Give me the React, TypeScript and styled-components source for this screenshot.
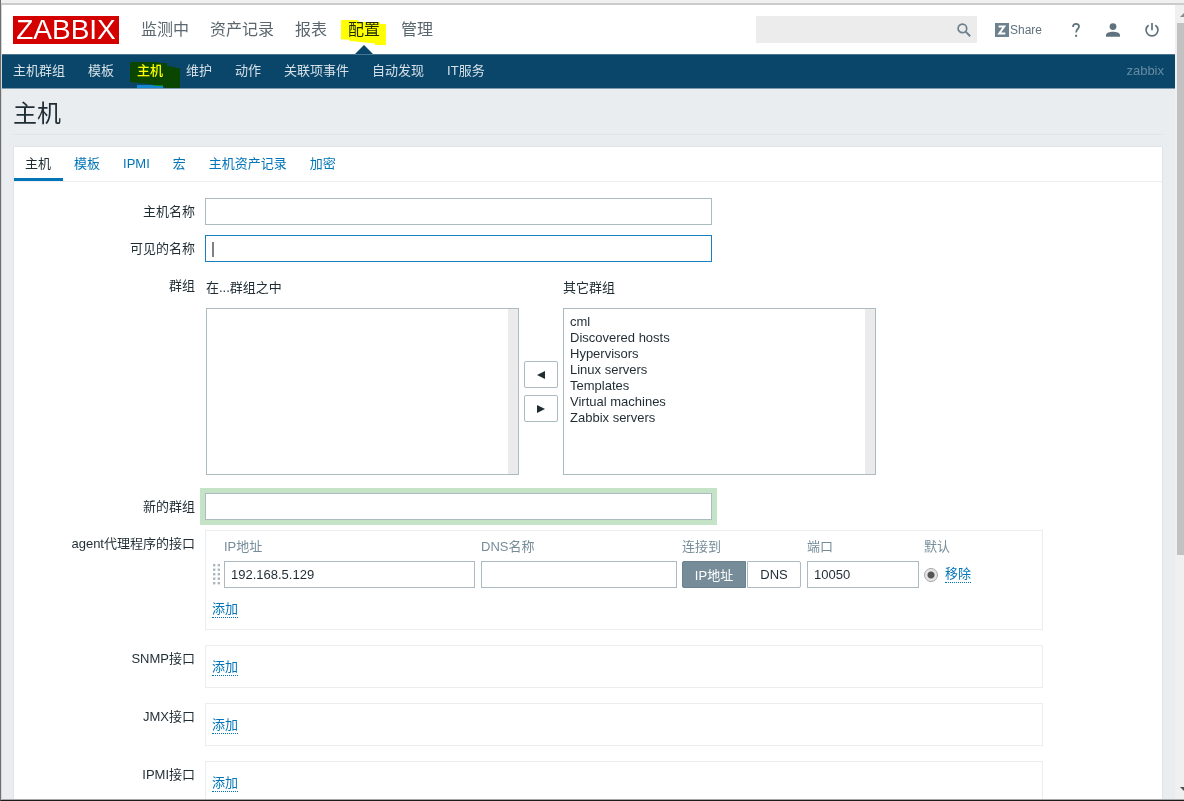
import React from "react";
import styled, { createGlobalStyle, css } from "styled-components";

const GlobalStyle = createGlobalStyle`
  * { box-sizing: border-box; }
  body { margin: 0; overflow: hidden; }
  body, button, input, select {
    font-family: "Liberation Sans", "Noto Sans CJK SC", sans-serif;
    font-size: 13px;
    color: #1f2c33;
  }
`;

const Window = styled.div`
  height: 100vh;
  display: flex;
  flex-direction: column;
  border-left: 1px solid #6e6e6e;
  border-bottom: 1px solid #1c1c1c;
`;
const WindowEdge = styled.div`
  flex: none;
  height: 5px;
  background: #f0f0f0;
  border-bottom: 2px solid #cbcbcb;
`;
const Viewport = styled.div`
  flex: 1;
  min-height: 0;
  display: flex;
  border-left: 1px solid #d5d8da;
  border-bottom: 1px solid #a8a8a8;
`;
const Page = styled.div`
  flex: 1;
  min-width: 0;
  overflow: hidden;
  background: #e9edf0;
`;

const ScrollTrack = styled.div`
  flex: none;
  width: 9px;
  display: flex;
  flex-direction: column;
  padding-left: 2px;
  background: #f0f0f0;
`;
const ScrollArrow = styled.svg`
  flex: none;
  width: 7px;
  height: 18px;
`;
const ScrollThumb = styled.div`
  flex: 0 0 67%;
  background: #c1c1c1;
`;
const ScrollSpace = styled.div`
  flex: 1;
`;

const Header = styled.header`
  height: 49px;
  display: flex;
  align-items: center;
  padding: 0 16px 0 11px;
  background: #fff;
`;
const Logo = styled.a`
  width: 106px;
  height: 28px;
  background: #d40000;
  color: #fff;
  font-size: 28px;
  line-height: 28px;
  text-align: center;
  text-decoration: none;
`;
const TopMenu = styled.nav`
  display: flex;
  align-self: stretch;
  gap: 21px;
  margin-left: 22px;
`;
const TopLink = styled.a<{ $active?: boolean }>`
  position: relative;
  font-size: 16px;
  line-height: 49px;
  color: ${(p) => (p.$active ? "#1f2c33" : "#5a676e")};
  text-decoration: none;
  ${(p) =>
    p.$active &&
    css`
      &::after {
        content: "";
        position: absolute;
        left: 7px;
        bottom: 0;
        border: 9px solid transparent;
        border-top: 0;
        border-bottom-color: #0a466a;
      }
    `}
`;
const Marker = styled.svg`
  position: absolute;
  mix-blend-mode: multiply;
  pointer-events: none;
  fill: #ffff00;
`;
const TopMarker = styled(Marker)`
  left: -7px;
  top: 15px;
  width: 45px;
  height: 25px;
`;
const SubMarker = styled(Marker)`
  left: -7px;
  top: 7px;
  width: 50px;
  height: 26px;
`;

const Tools = styled.div`
  display: flex;
  align-items: center;
  margin-left: auto;
  color: #6c818d;
`;
const Search = styled.form`
  display: flex;
  align-items: center;
  width: 221px;
  height: 27px;
  margin-right: 18px;
  background: #ececec;
`;
const SearchInput = styled.input`
  flex: 1;
  min-width: 0;
  height: 27px;
  border: 0;
  padding: 0 6px;
  background: transparent;
  outline: none;
`;
const IconButton = styled.button`
  display: flex;
  padding: 0 6px;
  border: 0;
  background: transparent;
  color: #6c818d;
`;
const ToolLink = styled.a`
  display: flex;
  align-items: center;
  gap: 1px;
  font-size: 12px;
  color: #5f727d;
  text-decoration: none;
`;
const ToolIcons = styled.div`
  display: flex;
  align-items: center;
  gap: 25px;
  margin-left: 29px;
`;

const SubMenu = styled.nav`
  display: flex;
  height: 35px;
  gap: 23px;
  padding: 0 11px;
  background: #0a466a;
  border-top: 1px solid #4a7590;
  border-bottom: 1px solid #7f9bad;
`;
const SubLink = styled.a<{ $active?: boolean }>`
  position: relative;
  height: 33px;
  line-height: 32px;
  color: #d5e0e7;
  text-decoration: none;
  ${(p) =>
    p.$active &&
    css`
      color: #fff;
      font-weight: 500;
      border-bottom: 3px solid #1287cf;
    `}
`;
const ServerName = styled.span`
  margin-left: auto;
  line-height: 32px;
  color: #668ba1;
`;

const Main = styled.main`
  padding: 6px 12px 0 11px;
`;
const Title = styled.h1`
  height: 40px;
  margin: 0 0 11px;
  border-bottom: 1px solid #dfe4e7;
  font-size: 24px;
  font-weight: 400;
  line-height: 37px;
`;
const Panel = styled.section`
  background: #fff;
  border: 1px solid #dfe4e7;
`;
const Tabs = styled.div`
  display: flex;
  height: 35px;
  border-bottom: 1px solid #ebeef0;
`;
const Tab = styled.a<{ $active?: boolean }>`
  height: 34px;
  padding: 0 12px 0 11px;
  line-height: 34px;
  color: ${(p) => (p.$active ? "#1f2c33" : "#0275b8")};
  text-decoration: none;
  border-bottom: ${(p) => (p.$active ? "3px solid #0275b8" : "0")};
`;

const Form = styled.form`
  display: flex;
  flex-direction: column;
  gap: 10px;
  padding: 16px 0;
`;
const Row = styled.div`
  display: grid;
  grid-template-columns: 181px 1fr;
  column-gap: 10px;
`;
const labelText = css`
  line-height: 27px;
  text-align: right;
`;
const Label = styled.label`
  ${labelText}
`;
const GroupLabel = styled.span`
  ${labelText}
`;
const Field = styled.div`
  position: relative;
`;
const TextInput = styled.input<{ $w: number; $focused?: boolean; $marked?: boolean }>`
  display: block;
  width: ${(p) => p.$w}px;
  max-width: 100%;
  height: 27px;
  padding: 0 6px;
  background: #fff;
  border: 1px solid ${(p) => (p.$focused ? "#1a7fbd" : "#acbbc2")};
  border-radius: 0;
  outline: none;
  box-shadow: ${(p) => (p.$marked ? "0 0 0 5px #c5e3c7" : "none")};
`;
const Caret = styled.span`
  position: absolute;
  left: 7px;
  top: 7px;
  width: 2px;
  height: 15px;
  background: #7d8286;
`;

const Twin = styled.div`
  display: flex;
  gap: 5px;
  padding: 8px 0 8px 1px;
`;
const ListColumn = styled.div`
  width: 313px;
`;
const ListTitle = styled.label`
  display: block;
  margin-bottom: 12px;
  line-height: 16px;
`;
const ListFrame = styled.div`
  height: 167px;
  padding-right: 10px;
  border: 1px solid #acbbc2;
  background: #ebebeb;
`;
const ListBox = styled.select`
  display: block;
  width: 100%;
  height: 165px;
  padding: 5px 6px;
  border: 0;
  border-radius: 0;
  outline: none;
  background: #fff;
  overflow: hidden;
  scrollbar-width: none;
  option {
    padding: 0;
    min-height: 16px;
    line-height: 16px;
  }
`;
const Movers = styled.div`
  display: flex;
  flex-direction: column;
  gap: 7px;
  padding-top: 81px;
`;
const MoveButton = styled.button`
  display: flex;
  align-items: center;
  justify-content: center;
  width: 34px;
  height: 27px;
  padding: 0;
  background: #fff;
  border: 1px solid #acbbc2;
  border-radius: 2px;
`;

const InterfaceRow = styled(Row)`
  margin-bottom: 5px;
`;
const InterfaceBox = styled.div<{ $filled?: boolean }>`
  width: 838px;
  max-width: 100%;
  padding: ${(p) => (p.$filled ? "8px 0 11px" : "13px 0 11px")};
  border: 1px solid #ebeef0;
`;
const InterfaceTable = styled.table`
  table-layout: fixed;
  width: 100%;
  margin-bottom: 13px;
  border-collapse: collapse;
  th {
    padding: 0 0 6px;
    font-weight: 400;
    line-height: 16px;
    text-align: left;
    color: #768d99;
  }
  td {
    height: 27px;
    padding: 0;
  }
`;
const Col = styled.col<{ $w?: number }>`
  width: ${(p) => (p.$w ? `${p.$w}px` : "auto")};
`;
const Grip = styled.svg`
  display: block;
  width: 7px;
  height: 21px;
  margin-left: 7px;
  fill: #acb8be;
`;
const Segments = styled.div`
  display: flex;
  gap: 1px;
`;
const Segment = styled.button<{ $on?: boolean }>`
  width: ${(p) => (p.$on ? 64 : 54)}px;
  height: 27px;
  padding: 0;
  border: 1px solid ${(p) => (p.$on ? "#6a808c" : "#acbbc2")};
  border-radius: ${(p) => (p.$on ? "2px 0 0 2px" : "0 2px 2px 0")};
  background: ${(p) => (p.$on ? "#768d99" : "#fff")};
  color: ${(p) => (p.$on ? "#fff" : "#1f2c33")};
`;
const DefaultCell = styled.div`
  display: flex;
  align-items: center;
  gap: 7px;
`;
const Radio = styled.input`
  appearance: none;
  width: 14px;
  height: 14px;
  margin: 0;
  border: 1px solid #a9a9a9;
  border-radius: 50%;
  background: radial-gradient(circle, #555 0 3px, #e4e4e4 4px);
`;
const ActionLink = styled.a`
  display: block;
  width: fit-content;
  line-height: 16px;
  color: #0275b8;
  text-decoration: none;
  border-bottom: 1px dotted #0275b8;
`;
const AddLine = styled.div`
  padding-left: 6px;
`;

const SearchIcon = () => (
  <svg width="14" height="14" viewBox="0 0 14 14" fill="none" stroke="currentColor">
    <circle cx="5.4" cy="5.4" r="4.3" strokeWidth="1.7" />
    <path d="M8.6 8.6 13.2 13.2" strokeWidth="2" />
  </svg>
);
const ShareIcon = () => (
  <svg width="14" height="14" viewBox="0 0 14 14">
    <path d="M0 0h14v14H0z" fill="#6c818d" />
    <path d="M3.6 3.6h5.600L4.300 10.400h6" fill="none" stroke="#fff" strokeWidth="2" />
  </svg>
);
const HelpIcon = () => (
  <svg width="10" height="14" viewBox="-1 0 10 14" fill="none" stroke="currentColor" strokeWidth="1.8">
    <path d="M1 3.900C1 1.900 2.200.900 4 .900s3 1 3 2.700C7 5.900 4.100 6 4.100 9.400" />
    <path d="M3.100 12.800h2" strokeWidth="2.100" />
  </svg>
);
const UserIcon = () => (
  <svg width="14" height="14" viewBox="0 0 14 14" fill="currentColor">
    <circle cx="7" cy="3.600" r="3.400" />
    <path d="M0 13.800v-1.700C0 10 3.600 8.800 7 8.800s7 1.200 7 3.300v1.700z" />
  </svg>
);
const PowerIcon = () => (
  <svg width="14" height="14" viewBox="0 0 14 14" fill="none" stroke="currentColor" strokeWidth="1.700">
    <path d="M7 0v7.200" />
    <path d="M3.600 2.200a5.900 5.900 0 1 0 6.800 0" />
  </svg>
);

const GripDots = () => (
  <Grip viewBox="0 0 7 21" aria-hidden="true">
    {[0, 4.5, 9, 13.5, 18].map((y) => (
      <React.Fragment key={y}>
        <rect x="0" y={y} width="2.400" height="2.400" />
        <rect x="4.600" y={y} width="2.400" height="2.400" />
      </React.Fragment>
    ))}
  </Grip>
);

const topItems = ["监测中", "资产记录", "报表", "配置", "管理"];
const subItems = ["主机群组", "模板", "主机", "维护", "动作", "关联项事件", "自动发现", "IT服务"];
const tabItems = ["主机", "模板", "IPMI", "宏", "主机资产记录", "加密"];
const otherGroups = [
  "cml",
  "Discovered hosts",
  "Hypervisors",
  "Linux servers",
  "Templates",
  "Virtual machines",
  "Zabbix servers",
];
const emptyInterfaces = ["SNMP接口", "JMX接口", "IPMI接口"];

export default function App() {
  return (
    <>
      <GlobalStyle />
      <Window>
        <WindowEdge />
        <Viewport>
          <Page>
            <Header>
              <Logo href="#">ZABBIX</Logo>
              <TopMenu>
                {topItems.map((t) => (
                  <TopLink key={t} href="#" $active={t === "配置"}>
                    {t}
                    {t === "配置" && (
                      <TopMarker viewBox="0 0 45 25">
                        <path d="M0 0h17l1 2h21v2h6v21H34v-1.500L20 22 9 21l-1-1.500H0z" />
                      </TopMarker>
                    )}
                  </TopLink>
                ))}
              </TopMenu>
              <Tools>
                <Search>
                  <SearchInput type="text" aria-label="搜索" />
                  <IconButton type="button" aria-label="搜索">
                    <SearchIcon />
                  </IconButton>
                </Search>
                <ToolLink href="#">
                  <ShareIcon />
                  Share
                </ToolLink>
                <ToolIcons>
                  <ToolLink href="#" aria-label="帮助">
                    <HelpIcon />
                  </ToolLink>
                  <ToolLink href="#" aria-label="用户">
                    <UserIcon />
                  </ToolLink>
                  <ToolLink href="#" aria-label="退出">
                    <PowerIcon />
                  </ToolLink>
                </ToolIcons>
              </Tools>
            </Header>
            <SubMenu>
              {subItems.map((t) => (
                <SubLink key={t} href="#" $active={t === "主机"}>
                  {t}
                  {t === "主机" && (
                    <SubMarker viewBox="0 0 50 26">
                      <path d="M1 0h27l1 1h8v3l8 1v1h5v20H35v-1.500l-12-1v-1L0 20V1z" />
                    </SubMarker>
                  )}
                </SubLink>
              ))}
              <ServerName>zabbix</ServerName>
            </SubMenu>

            <Main>
              <Title>主机</Title>
              <Panel>
                <Tabs>
                  {tabItems.map((t, i) => (
                    <Tab key={t} href="#" $active={i === 0}>
                      {t}
                    </Tab>
                  ))}
                </Tabs>
                <Form>
                  <Row>
                    <Label htmlFor="host">主机名称</Label>
                    <Field>
                      <TextInput id="host" type="text" $w={507} />
                    </Field>
                  </Row>
                  <Row>
                    <Label htmlFor="visible">可见的名称</Label>
                    <Field>
                      <TextInput id="visible" type="text" $w={507} $focused />
                      <Caret />
                    </Field>
                  </Row>
                  <Row>
                    <GroupLabel>群组</GroupLabel>
                    <Twin>
                      <ListColumn>
                        <ListTitle htmlFor="in-groups">在...群组之中</ListTitle>
                        <ListFrame>
                          <ListBox id="in-groups" multiple />
                        </ListFrame>
                      </ListColumn>
                      <Movers>
                        <MoveButton type="button" aria-label="加入">
                          <svg width="8" height="8" viewBox="0 0 8 8">
                            <path d="M8 0v8L0 4z" fill="#1f2c33" />
                          </svg>
                        </MoveButton>
                        <MoveButton type="button" aria-label="移出">
                          <svg width="8" height="8" viewBox="0 0 8 8">
                            <path d="M0 0v8l8-4z" fill="#1f2c33" />
                          </svg>
                        </MoveButton>
                      </Movers>
                      <ListColumn>
                        <ListTitle htmlFor="other-groups">其它群组</ListTitle>
                        <ListFrame>
                          <ListBox id="other-groups" multiple>
                            {otherGroups.map((g) => (
                              <option key={g}>{g}</option>
                            ))}
                          </ListBox>
                        </ListFrame>
                      </ListColumn>
                    </Twin>
                  </Row>
                  <Row>
                    <Label htmlFor="new-group">新的群组</Label>
                    <Field>
                      <TextInput id="new-group" type="text" $w={507} $marked />
                    </Field>
                  </Row>
                  <InterfaceRow>
                    <GroupLabel>agent代理程序的接口</GroupLabel>
                    <InterfaceBox $filled>
                      <InterfaceTable>
                        <colgroup>
                          <Col $w={18} />
                          <Col $w={257} />
                          <Col $w={201} />
                          <Col $w={125} />
                          <Col $w={117} />
                          <Col />
                        </colgroup>
                        <thead>
                          <tr>
                            <th />
                            <th>IP地址</th>
                            <th>DNS名称</th>
                            <th>连接到</th>
                            <th>端口</th>
                            <th>默认</th>
                          </tr>
                        </thead>
                        <tbody>
                          <tr>
                            <td>
                              <GripDots />
                            </td>
                            <td>
                              <TextInput $w={251} type="text" aria-label="IP地址" defaultValue="192.168.5.129" />
                            </td>
                            <td>
                              <TextInput $w={196} type="text" aria-label="DNS名称" />
                            </td>
                            <td>
                              <Segments>
                                <Segment type="button" $on>
                                  IP地址
                                </Segment>
                                <Segment type="button">DNS</Segment>
                              </Segments>
                            </td>
                            <td>
                              <TextInput $w={112} type="text" aria-label="端口" defaultValue="10050" />
                            </td>
                            <td>
                              <DefaultCell>
                                <Radio type="radio" name="main" aria-label="默认" defaultChecked />
                                <ActionLink href="#">移除</ActionLink>
                              </DefaultCell>
                            </td>
                          </tr>
                        </tbody>
                      </InterfaceTable>
                      <AddLine>
                        <ActionLink href="#">添加</ActionLink>
                      </AddLine>
                    </InterfaceBox>
                  </InterfaceRow>
                  {emptyInterfaces.map((name) => (
                    <InterfaceRow key={name}>
                      <GroupLabel>{name}</GroupLabel>
                      <InterfaceBox>
                        <AddLine>
                          <ActionLink href="#">添加</ActionLink>
                        </AddLine>
                      </InterfaceBox>
                    </InterfaceRow>
                  ))}
                </Form>
              </Panel>
            </Main>
          </Page>
          <ScrollTrack aria-hidden="true">
            <ScrollArrow viewBox="0 0 7 18">
              <path d="M3 12 7 8v4z" fill="#8a8a8a" />
            </ScrollArrow>
            <ScrollThumb />
            <ScrollSpace />
            <ScrollArrow viewBox="0 0 7 18">
              <path d="M3 6h4v4z" fill="#505050" />
            </ScrollArrow>
          </ScrollTrack>
        </Viewport>
      </Window>
    </>
  );
}
